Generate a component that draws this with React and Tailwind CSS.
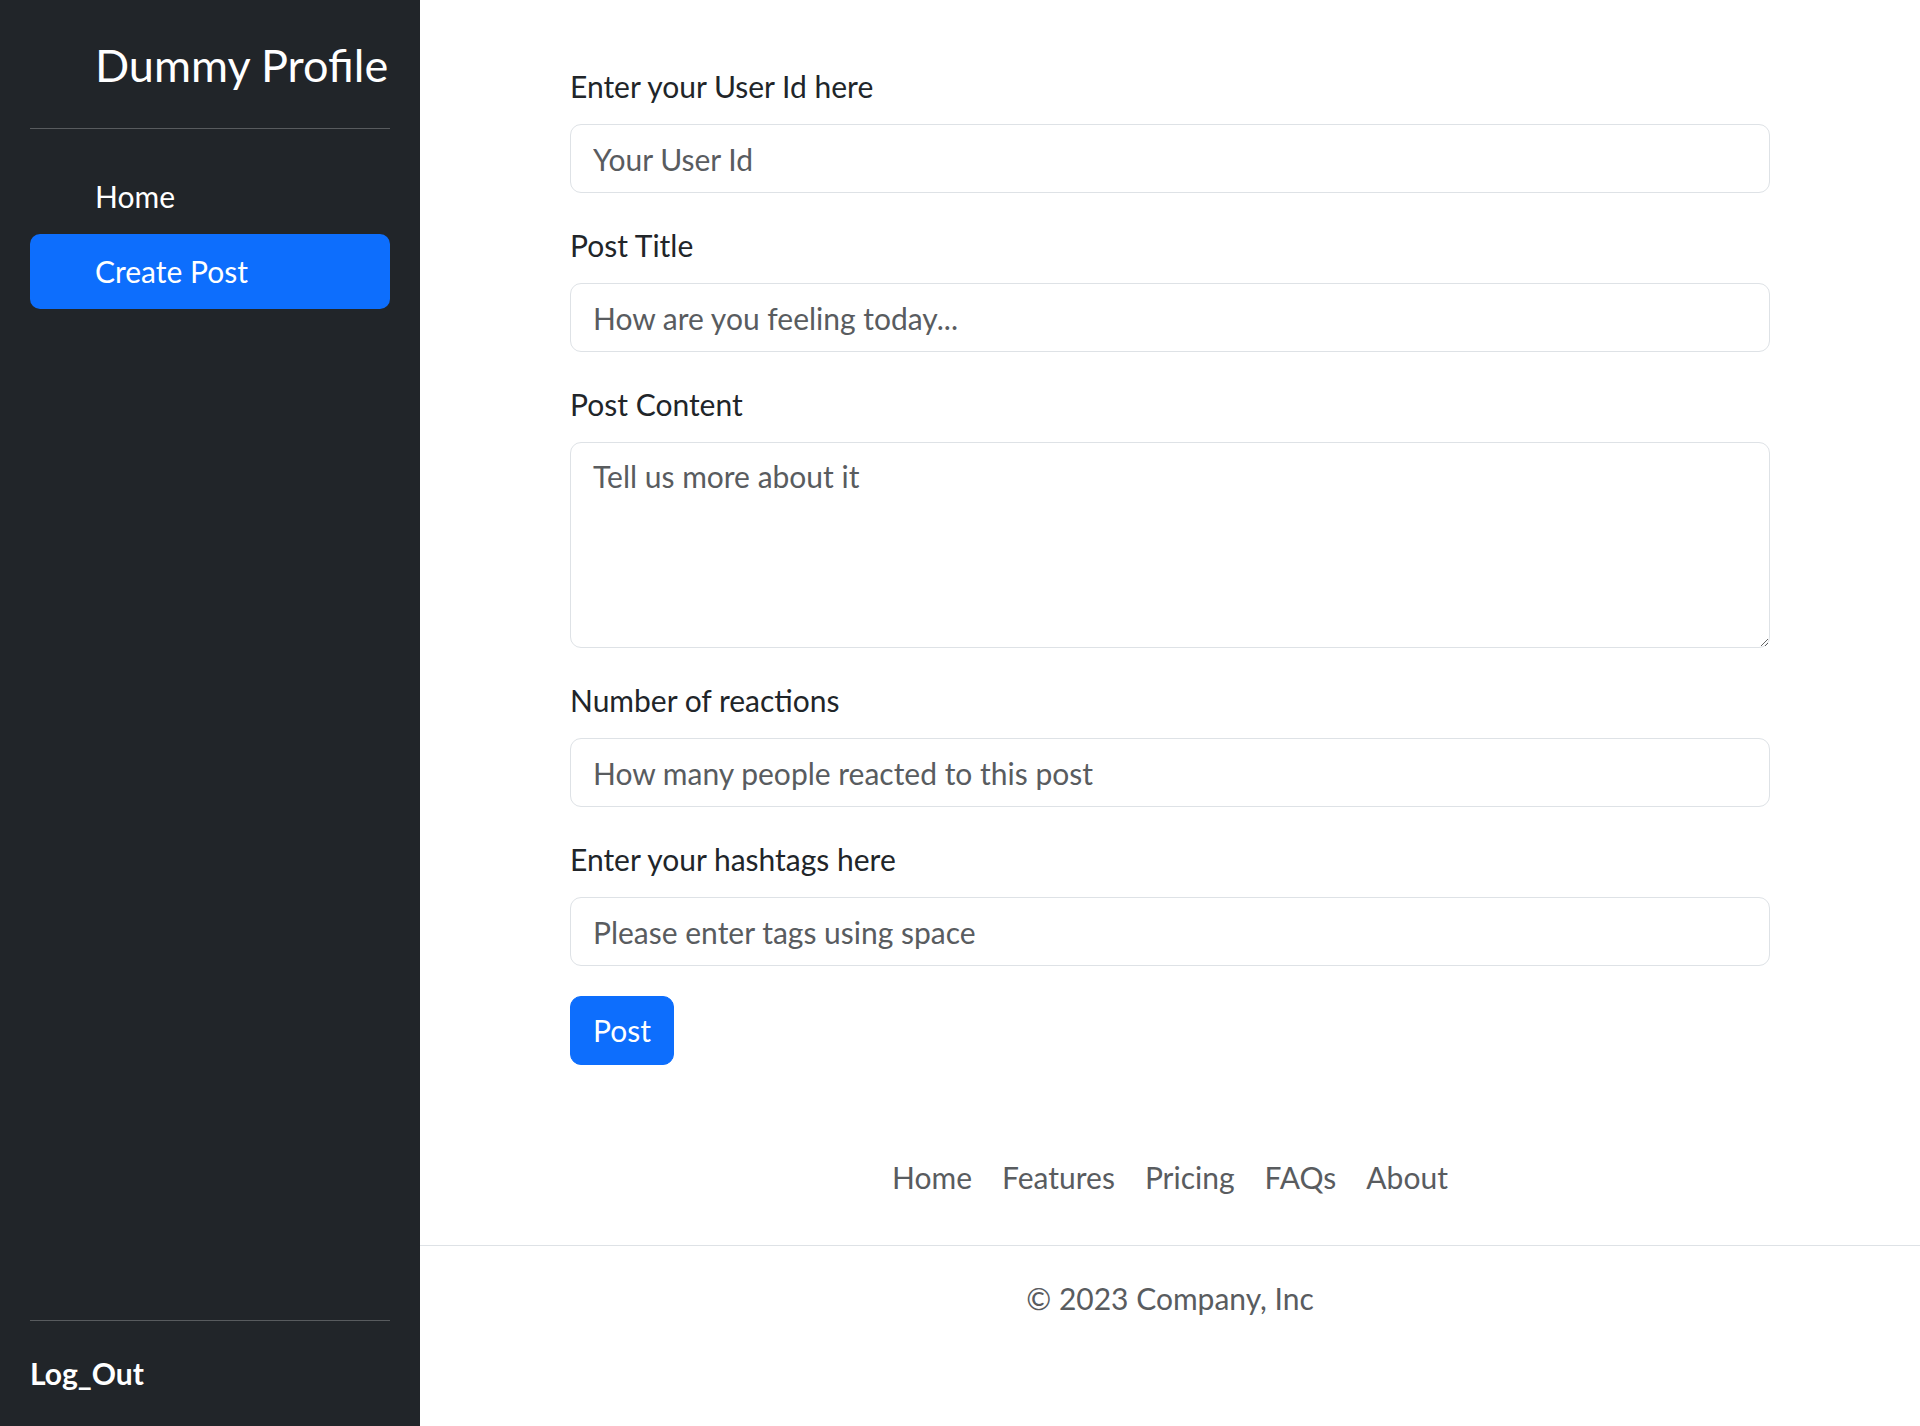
import React from "react";

const fields = [
  { label: "Enter your User Id here", placeholder: "Your User Id" },
  { label: "Post Title", placeholder: "How are you feeling today..." },
  { label: "Post Content", placeholder: "Tell us more about it", area: true },
  { label: "Number of reactions", placeholder: "How many people reacted to this post" },
  { label: "Enter your hashtags here", placeholder: "Please enter tags using space" },
];

const footerLinks = ["Home", "Features", "Pricing", "FAQs", "About"];

const Sidebar = () => (
  <aside className="w-[420px] shrink-0 bg-[#212529] p-[30px] flex flex-col text-white">
    <a href="#" className="block pt-[8px] pl-[65px] text-[45px] leading-[54px] text-white">
      Dummy Profile
    </a>
    <hr className="mt-[36px] mb-[30px] border-0 border-t border-[#ffffff40]" />
    <ul className="flex flex-col">
      <li>
        <a href="#" className="block py-[15px] pl-[65px] pr-[30px] leading-[45px] text-white">
          Home
        </a>
      </li>
      <li>
        <a
          href="#"
          className="block rounded-[10px] bg-[#0d6efd] py-[15px] pl-[65px] pr-[30px] leading-[45px] text-white"
        >
          Create Post
        </a>
      </li>
    </ul>
    <div className="mt-auto">
      <hr className="mb-[30px] border-0 border-t border-[#ffffff40]" />
      <a href="#" className="block font-bold leading-[45px] text-white">
        Log_Out
      </a>
    </div>
  </aside>
);

const Field = ({ label, placeholder, area }) => (
  <div className="mb-[30px]">
    <label className="block mb-[15px] leading-[45px]">{label}</label>
    {area ? (
      <textarea
        placeholder={placeholder}
        className="block w-full h-[206px] resize-y rounded-[11px] border border-[#dee2e6] bg-white px-[22px] py-[11px] leading-[45px] outline-none placeholder:text-[#595c5f]"
      />
    ) : (
      <input
        type="text"
        placeholder={placeholder}
        className="block w-full h-[69px] rounded-[11px] border border-[#dee2e6] bg-white px-[22px] leading-[45px] outline-none placeholder:text-[#595c5f]"
      />
    )}
  </div>
);

export default function App() {
  return (
    <div className="flex min-h-screen bg-white font-['Lato',sans-serif] text-[30px] leading-[1.5] text-[#212529]">
      <Sidebar />
      <main className="flex-1 flex flex-col">
        <form className="mx-auto w-[1200px] pt-[64px]">
          {fields.map((f) => (
            <Field key={f.label} {...f} />
          ))}
          <button
            type="button"
            className="block h-[69px] rounded-[11px] border border-[#0d6efd] bg-[#0d6efd] px-[22px] leading-[45px] text-white"
          >
            Post
          </button>
        </form>

        <footer className="mt-[45px] py-[30px]">
          <ul className="flex justify-center border-b border-[#dee2e6] pb-[30px] mb-[30px]">
            {footerLinks.map((l) => (
              <li key={l}>
                <a href="#" className="block px-[15px] py-[15px] leading-[45px] text-[#595c5f]">
                  {l}
                </a>
              </li>
            ))}
          </ul>
          <p className="text-center leading-[45px] text-[#595c5f]">© 2023 Company, Inc</p>
        </footer>
      </main>
    </div>
  );
}
